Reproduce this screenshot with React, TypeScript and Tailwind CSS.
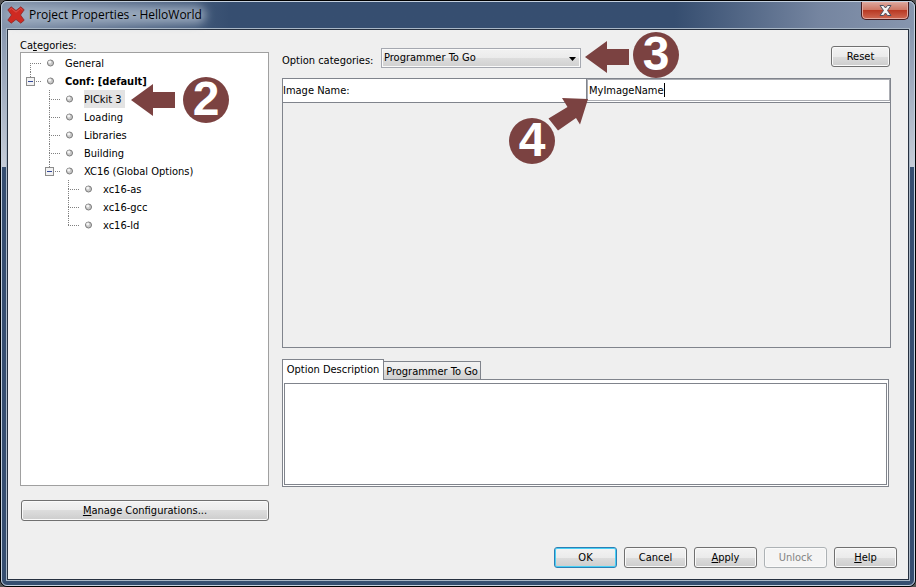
import * as React from "react"

type TreeNode = {
  label: string
  bold?: boolean
  children?: TreeNode[]
}

const tree: TreeNode[] = [
  { label: "General" },
  {
    label: "Conf: [default]",
    bold: true,
    children: [
      { label: "PICkit 3" },
      { label: "Loading" },
      { label: "Libraries" },
      { label: "Building" },
      {
        label: "XC16 (Global Options)",
        children: [{ label: "xc16-as" }, { label: "xc16-gcc" }, { label: "xc16-ld" }],
      },
    ],
  },
]

const buttonBase =
  "h-[21px] rounded-[3px] border border-[#707070] bg-[linear-gradient(#f3f3f3,#ebebeb_50%,#dddddd_50%,#cdcdcd)] text-center leading-4 shadow-[inset_0_0_0_1px_#fafafa]"

function Guide({ first, last, expandable }: { first: boolean; last: boolean; expandable: boolean }) {
  return (
    <svg className="h-[18px] w-6 shrink-0" viewBox="0 0 24 18" shapeRendering="crispEdges">
      <g stroke="#808080" strokeDasharray="1 1" fill="none">
        {!first && <path d="M9.5 0V9" />}
        {!last && <path d="M9.5 9V18" />}
        <path d="M9 9.5H20" />
      </g>
      {expandable && (
        <>
          <rect x="4" y="5" width="11" height="9" fill="#fff" />
          <rect x="5.5" y="5.5" width="8" height="8" fill="#f2f2f2" stroke="#8c8c8c" />
          <path d="M7 9.5H12" stroke="#33489b" />
        </>
      )}
    </svg>
  )
}

function Bullet() {
  return (
    <svg className="h-[18px] w-[11px] shrink-0" viewBox="0 0 11 18">
      <circle cx="5.5" cy="9" r="3" fill="#c9c9c9" stroke="#7a7a7a" />
      <circle cx="4.7" cy="8.1" r="1.5" fill="#f4f4f4" />
    </svg>
  )
}

function TreeList({
  nodes,
  root,
  selected,
  onSelect,
}: {
  nodes: TreeNode[]
  root?: boolean
  selected: string
  onSelect: (label: string) => void
}) {
  return (
    <ul className={root ? "pt-px" : "pl-[19px]"}>
      {nodes.map((node, i) => (
        <li key={node.label}>
          <div className="flex h-[18px] items-center">
            <Guide first={!!root && i === 0} last={i === nodes.length - 1} expandable={!!node.children} />
            <Bullet />
            <button
              onClick={() => onSelect(node.label)}
              className={`ml-[9px] h-[18px] pt-px pr-[3px] leading-[18px] whitespace-nowrap ${
                node.bold ? "font-bold" : ""
              } ${selected === node.label ? "bg-[#e3e3e3]" : ""}`}
            >
              {node.label}
            </button>
          </div>
          {node.children && <TreeList nodes={node.children} selected={selected} onSelect={onSelect} />}
        </li>
      ))}
    </ul>
  )
}

function StepBadge({ step, className }: { step: number; className: string }) {
  return (
    <div
      className={`pointer-events-none absolute flex size-[46px] items-center justify-center rounded-full bg-[#7b4241] pb-0.5 font-['Liberation_Sans',sans-serif] text-[48px] leading-[44px] font-bold text-white ${className}`}
    >
      {step}
    </div>
  )
}

function ArrowLeft({ className }: { className: string }) {
  return (
    <svg className={`pointer-events-none absolute h-8 w-11 ${className}`} viewBox="0 0 44 32">
      <path d="M0 16L22 0V8H44V24H22V32Z" fill="#7b4241" />
    </svg>
  )
}

function TitleBar() {
  return (
    <header className="flex h-[26px] items-start justify-between">
      <div className="relative flex h-full items-center">
        <div className="absolute top-1 left-0 h-[18px] w-[200px] rounded-full bg-[#a9b6c8]/80 blur-[5px]" />
        <svg className="relative ml-px size-[18px]" viewBox="0 0 18 18">
          <path
            d="M.8 3.800L4.200 .8L9 4.500L13.800 .8L17.200 3.800L13.500 9L17.200 14.200L13.800 17.200L9 13.500L4.200 17.200L.8 14.200L4.500 9Z"
            fill="#cf2a22"
            stroke="#8a2a28"
            strokeWidth=".8"
            strokeLinejoin="round"
          />
          <path d="M2.500 4L4.300 2.400L9 6.200L13.700 2.400L15.500 4" fill="none" stroke="#e0524a" />
        </svg>
        <h1 className="relative ml-1 font-['Open_Sans',sans-serif] text-[12px] leading-4 text-black">
          Project Properties - HelloWorld
        </h1>
      </div>
      <button
        aria-label="Close"
        className="mr-px flex h-[18px] w-12 items-center justify-center rounded-b-[5px] border border-t-0 border-[#451c20] bg-[linear-gradient(#dba79d,#cf7866_45%,#b93a24_50%,#cf6a54)] shadow-[inset_0_0_0_1px_#e2a99f]"
      >
        <svg className="h-[11px] w-[13px]" viewBox="0 0 13 11">
          <path
            d="M1 .5H4.500L6.500 3L8.500 .5H12L8.500 5.500L12 10.500H8.500L6.500 8L4.500 10.500H1L4.500 5.500Z"
            fill="#f4f4f4"
            stroke="#4d5060"
          />
        </svg>
      </button>
    </header>
  )
}

function CategoriesPane() {
  const [selected, setSelected] = React.useState("PICkit 3")

  return (
    <section className="flex w-[249px] shrink-0 flex-col pt-2">
      <h2 className="h-[14px] leading-4">
        Ca<u>t</u>egories:
      </h2>
      <nav className="flex-1 border border-[#a0a0a0] bg-white">
        <TreeList nodes={tree} root selected={selected} onSelect={setSelected} />
      </nav>
      <button className={`${buttonBase} mt-[14px] ml-px`}>
        <u>M</u>anage Configurations...
      </button>
    </section>
  )
}

function OptionsPane() {
  const [imageName, setImageName] = React.useState("MyImageName")
  const [tab, setTab] = React.useState("Option Description")

  return (
    <section className="flex min-w-0 flex-1 flex-col pt-4 pb-[34px]">
      <div className="flex h-[21px] items-center">
        <label htmlFor="option-category" className="w-[99px] pt-2">
          Option categories:
        </label>
        <div className="relative mt-[3px]">
          <select
            id="option-category"
            className="block h-5 w-[200px] appearance-none border border-[#a5a8b0] bg-[linear-gradient(#f2f2f2,#ebebeb_50%,#dddddd_50%,#d0d0d0)] pr-5 pl-0.5 shadow-[inset_0_0_0_1px_#fafafa]"
          >
            <option>Programmer To Go</option>
          </select>
          <svg className="pointer-events-none absolute top-[9px] right-[5px] h-1 w-[7px]" viewBox="0 0 7 4">
            <path d="M0 0H7L3.500 4Z" />
          </svg>
        </div>
        <button className={`${buttonBase} mr-px ml-auto w-[59px]`}>Reset</button>
      </div>

      <div className="mt-[11px] flex-1 border border-[#80848c]">
        <table className="w-full table-fixed border-collapse">
          <tbody>
            <tr className="h-[23px] border-b border-[#80848c] bg-white">
              <th scope="row" className="border-r border-[#80848c] p-0 text-left font-normal">
                <label htmlFor="image-name" className="block pt-px">
                  Image Name:
                </label>
              </th>
              <td className="relative p-0">
                <input
                  id="image-name"
                  value={imageName}
                  onChange={(e) => setImageName(e.target.value)}
                  className="block h-[22px] w-full border border-[#abadb3] bg-white pl-px outline-none"
                />
                {/* text caret */}
                <span className="pointer-events-none absolute top-1 left-[77px] h-[14px] w-px bg-black" />
              </td>
            </tr>
          </tbody>
        </table>
      </div>

      <div className="relative z-10 mt-[11px] -mb-px flex items-end" role="tablist">
        {["Option Description", "Programmer To Go"].map((name) => (
          <button
            key={name}
            role="tab"
            aria-selected={tab === name}
            onClick={() => setTab(name)}
            className={
              tab === name
                ? "h-[21px] w-[102px] border border-b-0 border-[#80848c] bg-white whitespace-nowrap"
                : "mb-px h-[18px] w-[97px] border border-b-0 border-l-0 border-[#80848c] bg-[linear-gradient(#f2f2f2,#ebebeb_50%,#dddddd_50%,#d0d0d0)] pt-0.5 whitespace-nowrap"
            }
          >
            {name}
          </button>
        ))}
      </div>
      <div role="tabpanel" className="mr-0.5 h-[108px] border border-[#80848c] bg-white px-px pt-[3px] pb-px">
        <div className="h-full border border-[#80848c]" />
      </div>
    </section>
  )
}

export default function App() {
  return (
    <div className="flex min-h-screen bg-[#555555] font-['DejaVu_Sans_Condensed','DejaVu_Sans',sans-serif] text-[11px] leading-4 text-black">
      <div className="relative flex flex-1 flex-col rounded-[7px] border border-black bg-[#364e70]">
        <div className="absolute inset-x-0 top-0 h-[166px] rounded-t-[6px] bg-linear-to-b from-[#8796ae] from-15% to-[#c6cdd8]" />
        <div className="absolute inset-x-0 top-0 h-[28px] rounded-t-[6px] bg-linear-to-r from-[#8494ab] from-0% via-[#364e70] via-25% to-[#364e70] to-70%" />
        <div className="absolute top-0 right-0 h-[28px] w-[240px] rounded-tr-[6px] bg-linear-to-r from-[#364e70] via-[#7585a0] via-60% to-[#8796ae]" />
        <div className="relative flex flex-1 flex-col rounded-[6px] border border-[#c4d0de] px-1 pb-1">
          <TitleBar />
          <main className="flex flex-1 flex-col border border-[#a9b7c6]">
            <div className="flex flex-1 flex-col border border-[#26303f] bg-[#efefef] pb-[11px]">
              <div className="flex flex-1 gap-[13px] pr-[17px] pl-3">
                <CategoriesPane />
                <OptionsPane />
              </div>
              <footer className="mt-[26px] flex justify-end gap-[7px] pr-[11px]">
                <button className="h-[21px] w-[63px] rounded-[3px] border border-[#2c7fb5] bg-[linear-gradient(#f3f3f3,#ebebeb_50%,#dddddd_50%,#cdcdcd)] shadow-[inset_0_0_0_1px_#48d0f5]">
                  OK
                </button>
                <button className={`${buttonBase} w-[63px]`}>Cancel</button>
                <button className={`${buttonBase} w-[63px]`}>
                  <u>A</u>pply
                </button>
                <button
                  disabled
                  className="h-[21px] w-[63px] rounded-[3px] border border-[#adb2b5] bg-[#f4f4f4] text-[#838383] shadow-[inset_0_0_0_1px_#fafafa]"
                >
                  Unlock
                </button>
                <button className={`${buttonBase} w-[63px]`}>
                  <u>H</u>elp
                </button>
              </footer>
            </div>
          </main>
        </div>

        <ArrowLeft className="top-[83px] left-[130px]" />
        <StepBadge step={2} className="top-[76px] left-[182px]" />
        <ArrowLeft className="top-[40px] left-[584px]" />
        <StepBadge step={3} className="top-[31px] left-[632px]" />
        <svg className="pointer-events-none absolute top-[97px] left-[547px] h-[34px] w-10" viewBox="0 0 40 34">
          <path d="M40 1L14 0L19.500 9L.500 20.500L10 32.500L28 20L32 26.500Z" fill="#7b4241" />
        </svg>
        <StepBadge step={4} className="top-[117px] left-[508px]" />
      </div>
    </div>
  )
}
